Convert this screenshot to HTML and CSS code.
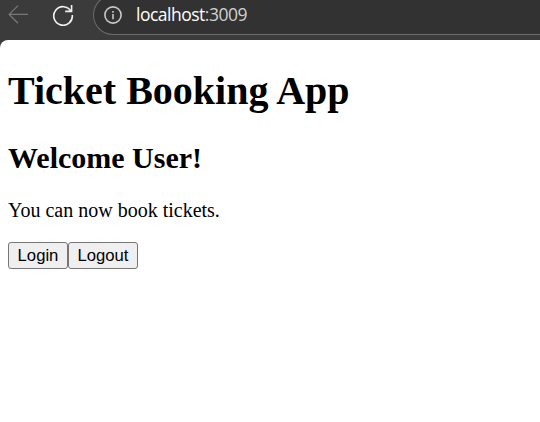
FILE: index.html
```
<!DOCTYPE html>
<html lang="en">
<head>
<meta charset="utf-8">
<title>Ticket Booking App</title>
<link rel="stylesheet" href="styles.css">
</head>
<body>
<header class="toolbar">
  <svg class="back" width="22" height="20" viewBox="0 0 22 20"><path d="M20 10.4H1.2M10 1.6L1.2 10.4l8.8 8.8"/></svg>
  <svg class="reload" width="22" height="22" viewBox="0 0 22 22"><path d="M19.1 7.3A9.3 9.3 0 1 0 20.3 11M19.6 1V7.4H13.2"/></svg>
  <div class="address">
    <svg class="info" width="18" height="18" viewBox="0 0 18 18"><circle cx="9" cy="9" r="8.1"/><path d="M9 8v5.2M9 4.9v1.8"/></svg>
    <span class="url">localhost<span class="port">:3009</span></span>
  </div>
</header>
<main class="page">
  <h1>Ticket Booking App</h1>
  <h2>Welcome User!</h2>
  <p>You can now book tickets.</p>
  <div class="actions"><button class="login">Login</button><button class="logout">Logout</button></div>
</main>
</body>
</html>
```
FILE: styles.css
```
* { box-sizing: border-box; }
body {
  margin: 0;
  height: 422px;
  overflow: hidden;
  background: #3b3b3b;
  font-family: "Liberation Serif", serif;
  color: #000;
}
svg { fill: none; flex: none; }
.toolbar {
  display: flex;
  align-items: flex-start;
  height: 40px;
}
.back { margin: 4px 0 0 8px; stroke: #777; stroke-width: 1.3; }
.reload { margin: 4px 0 0 22px; stroke: #f0f0f0; stroke-width: 1.6; }
.address {
  display: flex;
  align-items: center;
  flex: 1;
  height: 40px;
  margin: -5px 0 0 19px;
  padding-left: 10px;
  border: 1px solid #6b6b6b;
  border-right: 0;
  border-radius: 20px 0 0 20px;
  background: #323232;
}
.info { stroke: #c8c8c8; stroke-width: 1.6; }
.url {
  margin: -2px 0 0 14px;
  font: 17.5px/24px "Open Sans", sans-serif;
  letter-spacing: -0.5px;
  color: #fff;
}
.port { color: #d0d0d0; }
.page {
  height: 382px;
  padding: 28px 8px 0;
  border-top-left-radius: 8px;
  background: #fff;
}
h1 { margin: 0; font-size: 40px; line-height: 46px; }
h2 { margin: 27px 0 0; font-size: 30px; line-height: 34px; }
p { margin: 24px 0 0; font-size: 20px; line-height: 23px; }
.actions { display: flex; margin-top: 20px; }
button {
  height: 27px;
  padding: 0;
  border: 1px solid #767676;
  border-radius: 3px;
  background: #efefef;
  color: #000;
  font: 16.67px/24px "Liberation Sans", sans-serif;
}
.login { width: 60px; }
.logout { width: 70px; }
```
